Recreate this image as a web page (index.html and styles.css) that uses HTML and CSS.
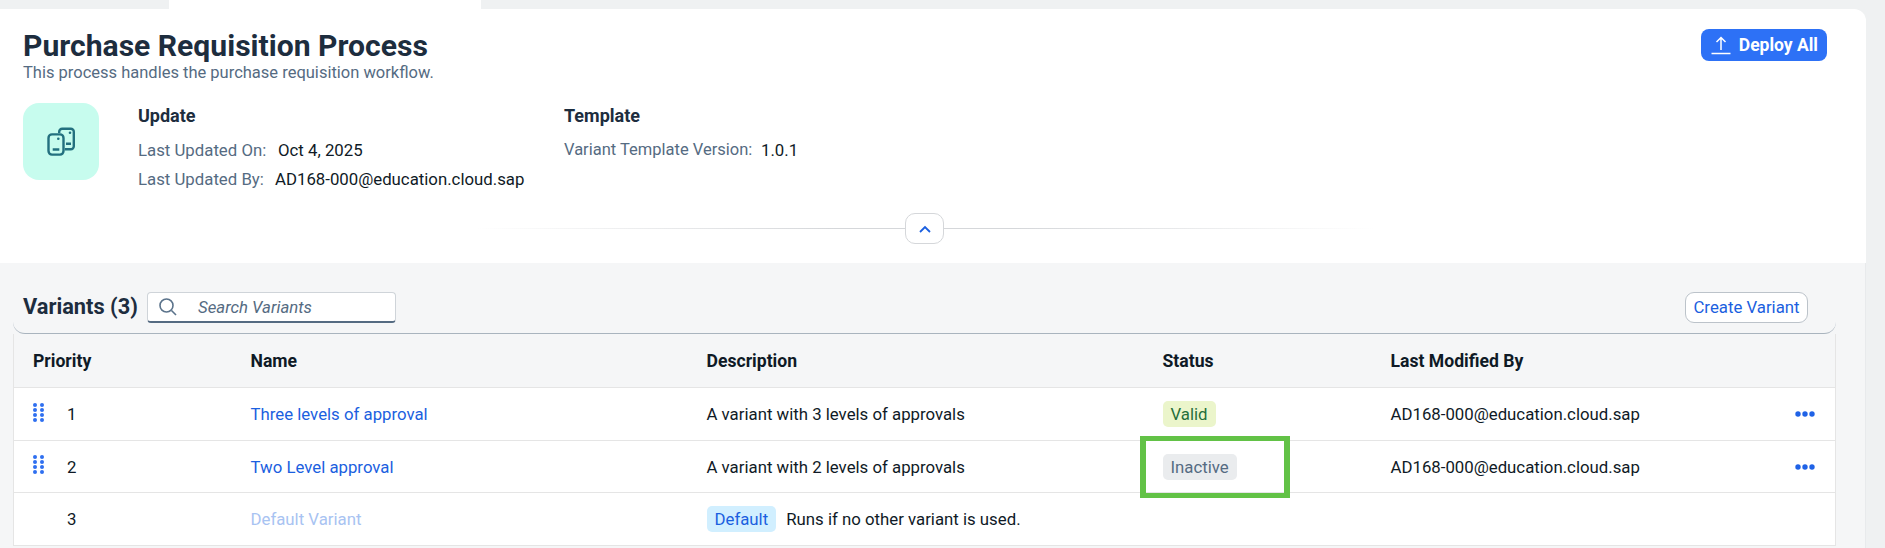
FILE: index.html
```html
<!DOCTYPE html>
<html>
<head>
<meta charset="utf-8">
<title>Purchase Requisition Process</title>
<link rel="stylesheet" href="styles.css">
</head>
<body>
<div class="strip"><div class="strip-tab"></div></div>
<div class="page">
	<div class="head">
		<div class="head-top">
			<div>
				<h1 class="title">Purchase Requisition Process</h1>
				<div class="subtitle">This process handles the purchase requisition workflow.</div>
			</div>
			<button class="deploy">
				<svg class="deploy-icon" width="20" height="20" viewBox="0 0 20 20" fill="none" stroke="#fff" stroke-width="1.5"><path d="M10 15V2.5M5.5 7L10 2.5L14.5 7M.5 18.5h19"/></svg>
				Deploy All
			</button>
		</div>
		<div class="head-info">
			<div class="app-icon">
				<svg width="36" height="36" viewBox="0 0 36 36" fill="none" stroke="#23707f" stroke-width="2.4">
					<path d="M16.200 9V7.700a3 3 0 0 1 3-3h8.600a3 3 0 0 1 3 3v14.600a3 3 0 0 1-3 3h-6"/>
					<rect x="5.500" y="10.400" width="15" height="20.200" rx="3.500"/>
					<path d="M9.700 25.500h6.600M23 19.800h5"/>
					<circle cx="15.300" cy="14.800" r="1.300" fill="#23707f" stroke="none"/>
					<circle cx="27" cy="8.800" r="1.300" fill="#23707f" stroke="none"/>
				</svg>
			</div>
			<div class="info-group info-update">
				<h3 class="info-title">Update</h3>
				<div class="info-row"><span class="label label-on">Last Updated On:</span><span>Oct 4, 2025</span></div>
				<div class="info-row"><span class="label label-by">Last Updated By:</span><span>AD168-000@education.cloud.sap</span></div>
			</div>
			<div class="info-group">
				<h3 class="info-title">Template</h3>
				<div class="info-row"><span class="label label-ver">Variant Template Version:</span><span>1.0.1</span></div>
			</div>
		</div>
		<div class="collapse">
			<button class="collapse-btn">
				<svg width="12" height="8" viewBox="0 0 12 8" fill="none" stroke="#1b5fe0" stroke-width="1.8"><path d="M1 7L6 2l5 5"/></svg>
			</button>
		</div>
	</div>

	<div class="content">
		<div class="toolbar">
			<h2 class="toolbar-title">Variants (3)</h2>
			<div class="search">
				<svg width="18" height="18" viewBox="0 0 18 18" fill="none" stroke="#5b738b" stroke-width="1.6"><circle cx="7.500" cy="7.500" r="6.500"/><path d="M12.500 12.500L17 17"/></svg>
				<span class="search-text">Search Variants</span>
			</div>
			<button class="create">Create Variant</button>
		</div>
		<div class="table-wrap">
			<table class="variants">
				<colgroup>
					<col class="col-priority"><col class="col-name"><col class="col-desc"><col class="col-status"><col class="col-mod"><col>
				</colgroup>
				<thead>
					<tr><th>Priority</th><th>Name</th><th>Description</th><th>Status</th><th>Last Modified By</th><th></th></tr>
				</thead>
				<tbody>
					<tr>
						<td><div class="prio"><svg class="handle" width="11" height="19" viewBox="0 0 11 19" fill="#2f6ff0"><circle cx="2" cy="2" r="2"/><circle cx="9" cy="2" r="2"/><circle cx="2" cy="7" r="2"/><circle cx="9" cy="7" r="2"/><circle cx="2" cy="12" r="2"/><circle cx="9" cy="12" r="2"/><circle cx="2" cy="17" r="2"/><circle cx="9" cy="17" r="2"/></svg><span class="num">1</span></div></td>
						<td><a class="link">Three levels of approval</a></td>
						<td>A variant with 3 levels of approvals</td>
						<td><span class="tag tag-valid">Valid</span></td>
						<td>AD168-000@education.cloud.sap</td>
						<td><svg class="more" width="20" height="6" viewBox="0 0 20 6" fill="#1f62e6"><circle cx="3" cy="3" r="2.700"/><circle cx="10" cy="3" r="2.700"/><circle cx="17" cy="3" r="2.700"/></svg></td>
					</tr>
					<tr>
						<td><div class="prio"><svg class="handle" width="11" height="19" viewBox="0 0 11 19" fill="#2f6ff0"><circle cx="2" cy="2" r="2"/><circle cx="9" cy="2" r="2"/><circle cx="2" cy="7" r="2"/><circle cx="9" cy="7" r="2"/><circle cx="2" cy="12" r="2"/><circle cx="9" cy="12" r="2"/><circle cx="2" cy="17" r="2"/><circle cx="9" cy="17" r="2"/></svg><span class="num">2</span></div></td>
						<td><a class="link">Two Level approval</a></td>
						<td>A variant with 2 levels of approvals</td>
						<td><span class="tag tag-inactive">Inactive</span></td>
						<td>AD168-000@education.cloud.sap</td>
						<td><svg class="more" width="20" height="6" viewBox="0 0 20 6" fill="#1f62e6"><circle cx="3" cy="3" r="2.700"/><circle cx="10" cy="3" r="2.700"/><circle cx="17" cy="3" r="2.700"/></svg></td>
					</tr>
					<tr>
						<td><div class="prio prio-plain"><span class="num">3</span></div></td>
						<td><a class="link link-off">Default Variant</a></td>
						<td><span class="tag tag-default">Default</span><span class="default-note">Runs if no other variant is used.</span></td>
						<td></td>
						<td></td>
						<td></td>
					</tr>
				</tbody>
			</table>
			<div class="highlight"></div>
		</div>
	</div>
</div>
</body>
</html>
```

FILE: styles.css
```css
html, body { margin: 0; padding: 0; height: 548px; overflow: hidden; background: #eff1f2; font: normal 16.8px/20px Roboto, sans-serif; color: #1d2d3e; }
h1, h2, h3 { margin: 0; padding: 0; }
button { font-family: inherit; cursor: pointer; }

/* top strip */
.strip { height: 9px; padding-left: 169px; }
.strip-tab { width: 312px; height: 9px; background: #fff; }

.page { width: 1866px; }

/* header card */
.head { box-sizing: border-box; height: 254px; padding-top: 20px; background: #fff; border-radius: 0 12px 0 0; }
.head-top { display: flex; justify-content: space-between; align-items: flex-start; padding: 0 39px 0 23px; }
.title { font-size: 30.1px; line-height: 34px; font-weight: 700; }
.subtitle { font-size: 16.5px; line-height: 19px; color: #556b82; }
.deploy { display: flex; align-items: center; gap: 8px; height: 32px; padding: 0 9px 0 10px; border: 0; border-radius: 8px; background: #2d71f6; color: #fff; font-size: 17.5px; font-weight: 700; }
.head-info { display: flex; padding: 21px 0 0 23px; }
.app-icon { display: flex; align-items: center; justify-content: center; width: 76px; height: 77px; margin-right: 39px; border-radius: 16px; background: #c7fcee; }
.info-group { padding-top: 3px; }
.info-update { width: 426px; }
.info-title { margin-bottom: 14px; font-size: 18px; line-height: 20px; font-weight: 700; }
.info-row { display: flex; height: 29px; line-height: 20px; color: #0f1a26; }
.label { color: #556b82; }
.label-on { width: 140px; }
.label-by { width: 137px; }
.label-ver { width: 197px; font-size: 16.5px; }

.collapse { display: flex; justify-content: center; width: 1849px; height: 31px; margin-top: 15px; background: linear-gradient(to right, rgba(215,217,220,0), #d5d7da 40%, #d5d7da 60%, rgba(215,217,220,0)) no-repeat center 15px / 900px 1px; }
.collapse-btn { display: flex; align-items: center; justify-content: center; width: 39px; height: 31px; padding: 0; border: 1px solid #d5d7da; border-radius: 10px; background: #fff; }

/* variants */
.content { box-sizing: border-box; height: 285px; padding: 29px 0 0 13px; background: #f5f6f7; border-right: 1px solid #e8eaec; }
.toolbar { display: flex; align-items: center; box-sizing: border-box; width: 1823px; height: 42px; padding: 0 28px 11px 10px; border-bottom: 1px solid #a9b4be; border-radius: 0 0 12px 12px; }
.toolbar-title { width: 124px; font-size: 21.8px; line-height: 32px; font-weight: 700; }
.search { display: flex; align-items: center; box-sizing: border-box; width: 249px; height: 31px; padding-left: 11px; border: 1px solid #cfd4d9; border-bottom: 2px solid #556b82; border-radius: 4px; background: #fff; }
.search-text { margin-left: 21px; font-style: italic; color: #556b82; }
.create { height: 31px; width: 123px; margin-left: auto; padding: 0; border: 1px solid #bcc3ca; border-radius: 9px; background: #fff; color: #1b5fe0; font-size: 16.8px; }

.table-wrap { position: relative; width: 1823px; }
.variants { width: 100%; border-collapse: collapse; table-layout: fixed; border-left: 1px solid #e5e5e5; border-right: 1px solid #e5e5e5; background: #fff; }
.col-priority { width: 218px; }
.col-name { width: 456px; }
.col-desc { width: 456px; }
.col-status { width: 228px; }
.col-mod { width: 390px; }
.variants th { height: 53px; padding: 0 0 0 19px; text-align: left; font-size: 17.6px; font-weight: 700; color: #0f1a26; background: #f5f6f7; border-bottom: 1px solid #e5e5e5; }
.variants td { height: 52px; padding: 0 0 0 19px; color: #0f1a26; border-bottom: 1px solid #e5e5e5; }
.variants tbody tr:nth-child(2) td { height: 51px; }
.prio { display: flex; align-items: center; }
.prio-plain { padding-left: 34px; }
.handle { margin: -4px 23px 0 0; }
.num { line-height: 20px; }
.variants .link { color: #1b5fe0; }
.variants .link-off { color: #a8c3f2; }
.tag { display: inline-block; padding: 3px 8px; line-height: 20px; border-radius: 5px; }
.tag-valid { background: #ebf5cb; color: #256f3a; }
.tag-inactive { background: #eaecee; color: #556b82; }
.tag-default { background: #d1efff; color: #1b5fe0; }
.default-note { margin-left: 10px; }
.more { display: block; margin-left: 14px; }
.highlight { position: absolute; left: 1127px; top: 102px; width: 138px; height: 52px; border: solid #62c246; border-width: 5px 6px; }
```
